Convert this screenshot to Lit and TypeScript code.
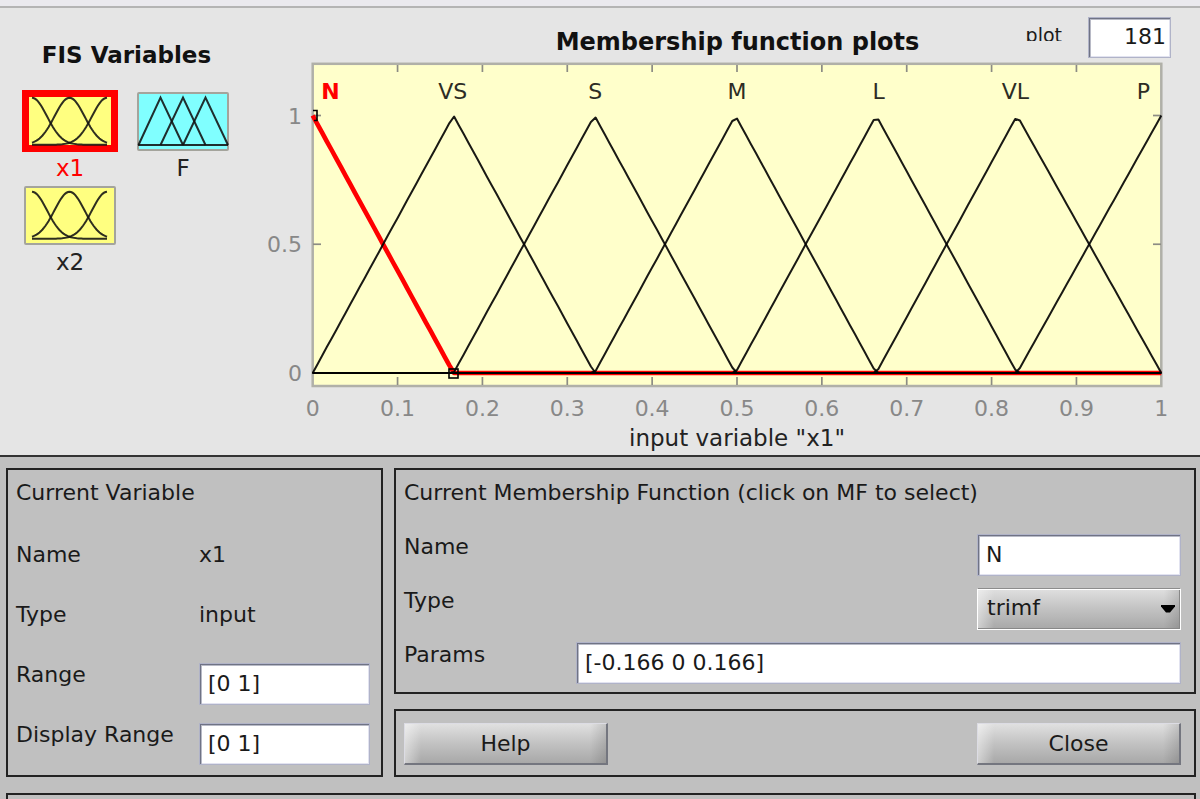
import { LitElement, html, svg, css } from "lit";
import { customElement, property, state } from "lit/decorators.js";

type Shape = "gauss" | "triangle";

interface MembershipFunction {
  name: string;
  params: [number, number, number];
  labelX: number;
}

const FUNCTIONS: MembershipFunction[] = [
  { name: "N", params: [-0.166, 0, 0.166], labelX: 0.021 },
  { name: "VS", params: [0, 0.166, 0.332], labelX: 0.165 },
  { name: "S", params: [0.166, 0.332, 0.498], labelX: 0.333 },
  { name: "M", params: [0.332, 0.498, 0.664], labelX: 0.5 },
  { name: "L", params: [0.498, 0.664, 0.83], labelX: 0.667 },
  { name: "VL", params: [0.664, 0.83, 1], labelX: 0.828 },
  { name: "P", params: [0.83, 1, 1.166], labelX: 0.979 },
];

const trimf = (x: number, [a, b, c]: [number, number, number]) =>
  Math.max(0, Math.min((x - a) / (b - a), (c - x) / (c - b)));

/* Small picture of a variable: bell curves for inputs, triangles for outputs. */
@customElement("variable-tile")
export class VariableTile extends LitElement {
  @property() name = "";
  @property() shape: Shape = "gauss";
  @property({ type: Boolean }) selected = false;

  static styles = css`
    :host {
      display: block;
    }
    .tile {
      display: flex;
      flex-direction: column;
      align-items: center;
      width: 96px;
      margin: 0;
      padding: 0;
      border: 0;
      background: none;
      color: #222;
      font: 23px/32px "DejaVu Sans", sans-serif;
      cursor: pointer;
    }
    .selected {
      color: #f00;
    }
    .picture {
      display: block;
    }
    .curve {
      fill: none;
      stroke: #111;
      stroke-width: 2;
      stroke-opacity: 0.88;
    }
  `;

  private curves(): string[] {
    if (this.shape === "triangle") {
      return [
        "M3 55H93",
        "M3.500 55L25.500 7.500L48 55",
        "M25.500 55L48 7.500L70.500 55",
        "M48 55L70.500 7.500L93 55",
      ];
    }
    return [10, 47.5, 85].map((centre) => {
      const points: string[] = [];
      for (let x = 10; x <= 85; x += 1.5) {
        const v = Math.exp(-((x - centre) ** 2) / (2 * 15 * 15));
        points.push(`${x} ${(54.8 - 47 * v).toFixed(2)}`);
      }
      return "M" + points.join("L");
    });
  }

  render() {
    const fill = this.shape === "gauss" ? "#ffff80" : "#80ffff";
    return html`<button class="tile ${this.selected ? "selected" : ""}">
      <svg class="picture" width="96" height="62" viewBox="0 0 96 62">
        ${this.selected
          ? svg`<rect x="3.5" y="3.5" width="89" height="55" fill=${fill} stroke="#f00" stroke-width="7"></rect>`
          : svg`<rect x="3" y="3" width="90" height="57" rx="1" fill=${fill} stroke="#a4a49c" stroke-width="2"></rect>`}
        ${this.curves().map((d) => svg`<path class="curve" d=${d}></path>`)}
      </svg>
      <span>${this.name}</span>
    </button>`;
  }
}

@customElement("membership-plot")
export class MembershipPlot extends LitElement {
  @property() selected = "N";
  @property() variable = "x1";
  @property({ type: Number }) points = 181;

  static styles = css`
    :host {
      display: block;
    }
    .plot {
      display: block;
      width: 100%;
      height: auto;
      font: 22px "DejaVu Sans", sans-serif;
    }
    .frame {
      fill: #ffffcb;
      stroke: #b0b0a8;
      stroke-width: 2.5;
    }
    .tick {
      stroke: #8c8c84;
      stroke-width: 1.7;
    }
    .number {
      fill: #888;
    }
    .middle {
      text-anchor: middle;
    }
    .end {
      text-anchor: end;
    }
    .name {
      fill: #2c2c24;
      text-anchor: middle;
      cursor: pointer;
    }
    .name.current {
      fill: #f00;
      font-weight: bold;
    }
    .axis-title {
      fill: #222;
      font-size: 23px;
      text-anchor: middle;
    }
    .curve {
      fill: none;
      stroke: #000;
      stroke-opacity: 0.9;
      stroke-width: 2;
      stroke-linejoin: round;
    }
    .curve.current {
      stroke: #f00;
      stroke-opacity: 1;
      stroke-width: 4.6;
    }
    .handle {
      fill: none;
      stroke: #000;
      stroke-width: 1.6;
    }
  `;

  private px = (x: number) => 62.7 + x * 848.6;
  private py = (y: number) => 315 - y * 257.5;

  private path(mf: MembershipFunction) {
    const out: string[] = [];
    for (let i = 0; i < this.points; i++) {
      const x = i / (this.points - 1);
      out.push(`${this.px(x).toFixed(1)},${this.py(trimf(x, mf.params)).toFixed(1)}`);
    }
    return out.join(" ");
  }

  render() {
    const { px, py } = this;
    const tenths = Array.from({ length: 11 }, (_, i) => i / 10);
    const current = FUNCTIONS.find((f) => f.name === this.selected)!;
    return html`<svg class="plot" viewBox="0 0 950 397" role="img" aria-label="Membership function plots">
      <rect class="frame" x="62.700" y="5.800" width="848.600" height="322.200"></rect>
      ${tenths.slice(1, 10).map(
        (t) => svg`
          <line class="tick" x1=${px(t)} x2=${px(t)} y1="7" y2="14"></line>
          <line class="tick" x1=${px(t)} x2=${px(t)} y1="319" y2="327"></line>`
      )}
      ${[0, 0.5, 1].map(
        (v) => svg`
          <line class="tick" x1="63" x2="71" y1=${py(v)} y2=${py(v)}></line>
          <line class="tick" x1="903" x2="911" y1=${py(v)} y2=${py(v)}></line>
          <text class="number end" x="52" y=${py(v) + 8}>${v}</text>`
      )}
      ${tenths.map((t) => svg`<text class="number middle" x=${px(t)} y="358">${t}</text>`)}
      <polyline class="curve current" points=${this.path(current)}></polyline>
      ${FUNCTIONS.filter((f) => f !== current).map(
        (f) => svg`<polyline class="curve" points=${this.path(f)}></polyline>`
      )}
      <path class="handle" d="M63 52.500h4v10h-3"></path>
      <rect class="handle" x="199" y="311" width="9" height="9"></rect>
      ${FUNCTIONS.map(
        (f) => svg`<text class="name ${f === current ? "current" : ""}" x=${px(f.labelX)} y="41">${f.name}</text>`
      )}
      <text class="axis-title" x="487" y="388">input variable "${this.variable}"</text>
    </svg>`;
  }
}

@customElement("app-root")
export class AppRoot extends LitElement {
  @state() private variable = "x1";

  static styles = css`
    :host {
      display: flex;
      flex-direction: column;
      min-height: 100vh;
      background: #c0c0c0;
      color: #1a1a1a;
      font: 22px/30px "DejaVu Sans", sans-serif;
    }
    *,
    *::before {
      box-sizing: border-box;
    }
    .strip {
      height: 8px;
      background: #eae9ee;
      border-bottom: 2px solid #b4b4b4;
    }
    .top {
      display: grid;
      grid-template-columns: 250px 1fr;
      background: #e5e5e5;
      border-bottom: 2px solid #333;
    }
    .variables {
      padding: 32px 19px 0 22px;
    }
    .heading {
      margin: 0;
      color: #111;
      font-size: 23px;
      line-height: 30px;
      font-weight: bold;
      text-align: center;
    }
    .tiles {
      display: grid;
      grid-template-columns: 96px 96px;
      column-gap: 17px;
      margin-top: 20px;
    }
    .second-row {
      grid-column: 1;
    }
    .plot-head {
      display: grid;
      padding-top: 9px;
    }
    .plot-head > * {
      grid-area: 1 / 1;
    }
    .plot-title {
      margin: 10px 38px 0 63px;
      font-size: 24px;
    }
    .points {
      display: flex;
      justify-self: end;
      gap: 26px;
      margin-right: 29px;
    }
    .points-label {
      height: 18px;
      margin-top: 6px;
      overflow: hidden;
      font-size: 19px;
      line-height: 24px;
    }
    .field {
      width: 100%;
      height: 42px;
      margin: 0;
      padding: 0 8px 1px;
      border: 1px solid #b0b3c8;
      border-radius: 0;
      outline: 0;
      background: #fff;
      box-shadow: inset 1px 1px 0 #6f7385, inset 2px 2px 0 #b8bac6, inset -1px -1px 0 #e2e3f0;
      color: #1a1a1a;
      font: inherit;
    }
    .points-field {
      width: 83px;
      height: 41px;
      padding: 0 4px 2px;
      text-align: right;
    }
    .lower {
      display: grid;
      grid-template-columns: 377fr 802fr;
      gap: 11px;
      padding: 11px 4px 16px 6px;
    }
    .stack {
      display: flex;
      flex-direction: column;
      gap: 15px;
    }
    .panel {
      border: 2px solid #222;
    }
    .panel-title {
      margin: 0;
      font: inherit;
    }
    .variable-panel {
      padding: 8px 11px 10px 8px;
    }
    .variable-rows {
      display: grid;
      grid-template-columns: 183px 1fr;
      grid-auto-rows: 45px;
      row-gap: 15px;
      margin-top: 32px;
    }
    .variable-rows .field {
      margin-top: 3px;
    }
    .function-panel {
      padding: 8px 13px 8px 8px;
    }
    .function-rows {
      display: grid;
      grid-template-columns: 172px 1fr;
      grid-auto-rows: 42px;
      row-gap: 12px;
      margin-top: 26px;
    }
    .function-rows label {
      line-height: 26px;
    }
    .short {
      width: 204px;
      justify-self: end;
    }
    .choice {
      display: grid;
      align-items: center;
    }
    .choice > * {
      grid-area: 1 / 1;
    }
    .select {
      appearance: none;
      width: 100%;
      height: 42px;
      margin: 0;
      padding: 0 9px 2px;
      border: 1px solid #fff;
      border-top-color: #8c8c8c;
      border-radius: 0;
      background: linear-gradient(90deg, #ffffff70, #fff0 8%, #0000 92%, #00000020),
        linear-gradient(#e0e0e0, #c2c2c2 50%, #a8a8a8);
      box-shadow: inset 0 1px 0 #fff, inset -1px -1px 0 #888;
      color: #1a1a1a;
      font: inherit;
    }
    .arrow {
      justify-self: end;
      margin-right: 6px;
      pointer-events: none;
    }
    .actions {
      display: flex;
      justify-content: space-between;
      padding: 12px 13px 10px 8px;
    }
    .button {
      width: 204px;
      height: 42px;
      margin: 0;
      padding: 0;
      border: 1px solid #dcdce4;
      border-width: 1px 2px 2px 1px;
      border-right-color: #74767f;
      border-bottom-color: #74767f;
      background: linear-gradient(90deg, #ffffff70, #fff0 8%, #0000 92%, #00000020),
        linear-gradient(#e0e0e0, #c2c2c2 50%, #a8a8a8);
      color: #1a1a1a;
      font: inherit;
    }
    .status {
      flex: 1;
      margin: 0 4px 0 6px;
      border-bottom: 0;
    }
  `;

  render() {
    return html`
      <div class="strip"></div>
      <section class="top">
        <div class="variables">
          <h2 class="heading">FIS Variables</h2>
          <div class="tiles">
            <variable-tile name="x1" ?selected=${this.variable === "x1"}></variable-tile>
            <variable-tile name="F" shape="triangle"></variable-tile>
            <variable-tile class="second-row" name="x2"></variable-tile>
          </div>
        </div>
        <div>
          <div class="plot-head">
            <h2 class="heading plot-title">Membership function plots</h2>
            <div class="points">
              <label class="points-label" for="points">plot</label>
              <input class="field points-field" id="points" .value=${"181"} />
            </div>
          </div>
          <membership-plot selected="N" variable=${this.variable}></membership-plot>
        </div>
      </section>
      <main class="lower">
        <section class="panel variable-panel">
          <h3 class="panel-title">Current Variable</h3>
          <div class="variable-rows">
            <span>Name</span><span>${this.variable}</span>
            <span>Type</span><span>input</span>
            <label for="range">Range</label>
            <input class="field" id="range" .value=${"[0 1]"} />
            <label for="display">Display Range</label>
            <input class="field" id="display" .value=${"[0 1]"} />
          </div>
        </section>
        <div class="stack">
          <section class="panel function-panel">
            <h3 class="panel-title">Current Membership Function (click on MF to select)</h3>
            <div class="function-rows">
              <label for="name">Name</label>
              <input class="field short" id="name" .value=${"N"} />
              <label for="type">Type</label>
              <div class="choice short">
                <select class="select" id="type">
                  <option>trimf</option>
                </select>
                <svg class="arrow" width="14" height="8" viewBox="0 0 14 8">
                  <path d="M0 0H14V1.500L9 7.500H5L0 1.500Z"></path>
                </svg>
              </div>
              <label for="params">Params</label>
              <input class="field" id="params" .value=${"[-0.166 0 0.166]"} />
            </div>
          </section>
          <section class="panel actions">
            <button class="button">Help</button>
            <button class="button">Close</button>
          </section>
        </div>
      </main>
      <div class="panel status"></div>
    `;
  }
}
